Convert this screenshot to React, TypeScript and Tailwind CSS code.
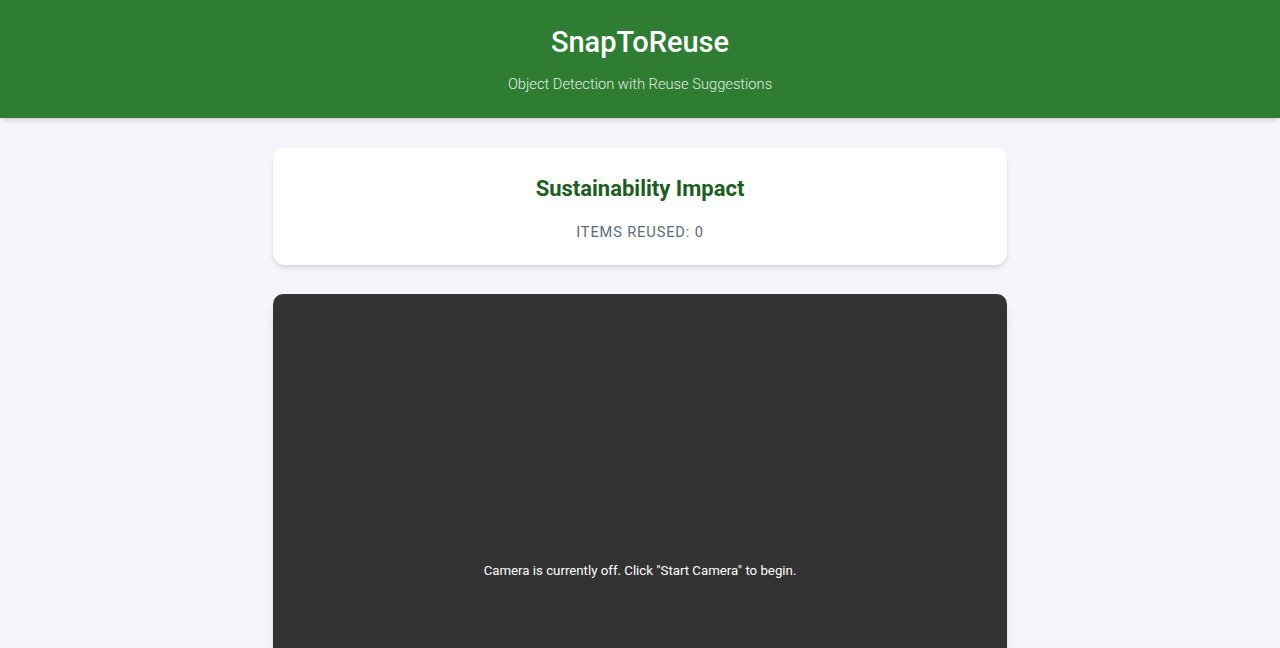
// region component
export default function App() {
  return (
    <div className="min-h-screen bg-[#f4f6fa] font-['Roboto',sans-serif]">
      {/* Cabecera */}
      <header className="h-[118px] bg-[#2e7d32] text-white flex flex-col items-center shadow-md relative z-10">
        <h1 className="mt-[23px] text-[29px] leading-[38px] font-medium">SnapToReuse</h1>
        <p className="mt-[13px] text-[14.7px] leading-[20px] text-[#e3efe3] font-light">
          Object Detection with Reuse Suggestions
        </p>
      </header>

      <main className="max-w-[734px] mx-auto pt-[30px] flex flex-col gap-[29px]">
        {/* Impacto */}
        <section className="h-[117px] bg-white rounded-xl shadow-md flex flex-col items-center">
          <h2 className="mt-[27px] text-[22px] leading-[28px] font-bold text-[#1b5e20]">
            Sustainability Impact
          </h2>
          <p className="mt-[20px] text-[14.6px] leading-[18px] tracking-[0.06em] text-[#5c6b7a] uppercase">
            Items Reused: 0
          </p>
        </section>

        {/* Cámara */}
        <section className="h-[554px] bg-[#333333] rounded-[10px] shadow-lg flex items-center justify-center">
          <p className="text-[13.25px] text-white">Camera is currently off. Click "Start Camera" to begin.</p>
        </section>
      </main>
    </div>
  );
}
// endregion
